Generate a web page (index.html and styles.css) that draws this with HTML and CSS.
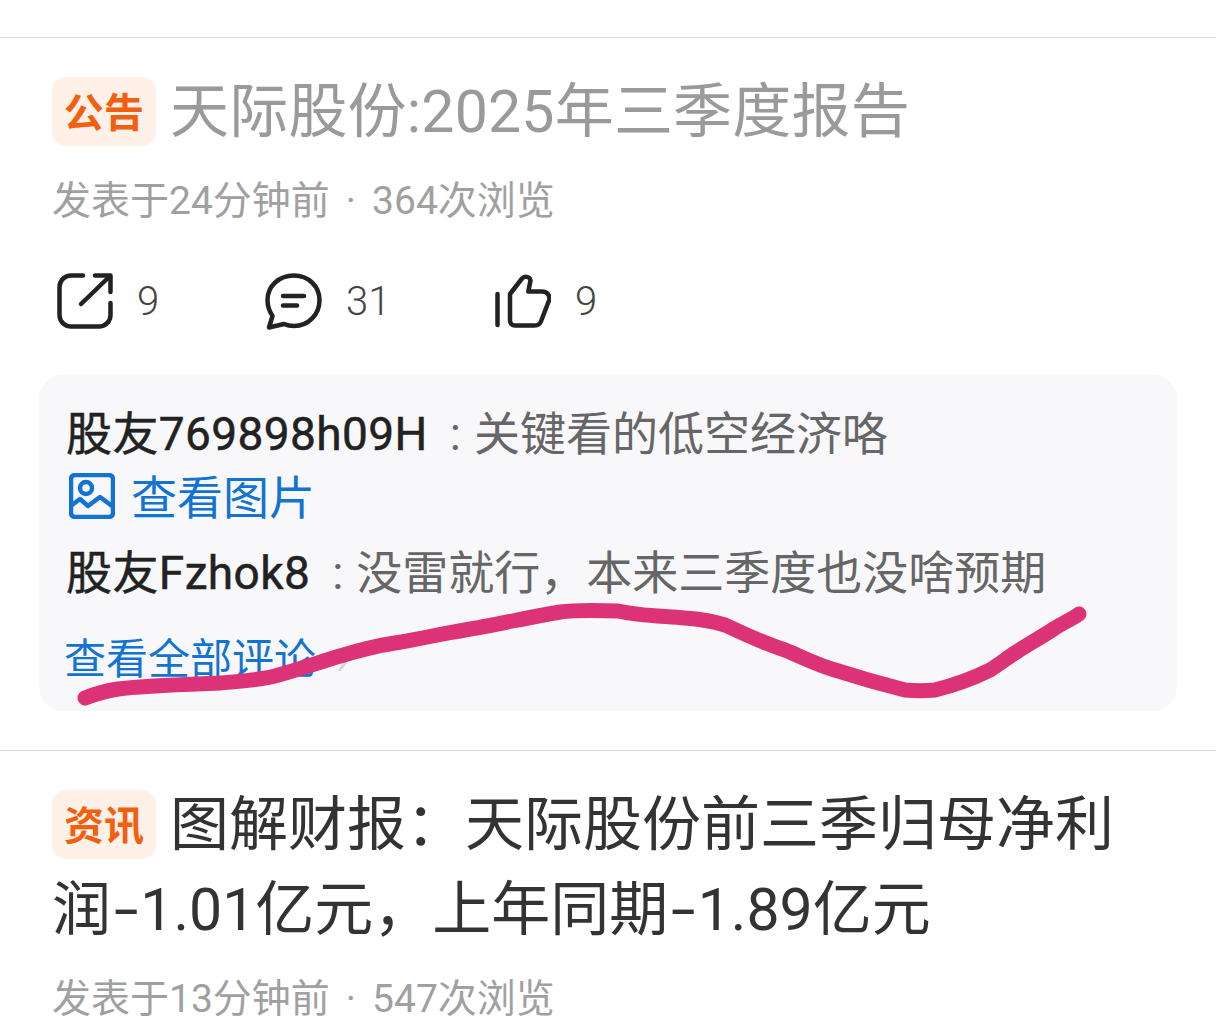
FILE: index.html
```html
<!DOCTYPE html>
<html lang="zh-CN">
<head>
    <meta charset="UTF-8">
    <meta name="viewport" content="width=device-width, initial-scale=1.0">
    <title>公告列表</title>
    <link rel="stylesheet" href="styles.css">
</head>
<body>
    <div class="feed">
        <div class="item">
            <h2 class="item-title muted"><span class="tag">公告</span>天际股份:2025年三季度报告</h2>
            <p class="item-meta">发表于24分钟前<span class="dot">·</span>364次浏览</p>
            <div class="stats">
                <div class="stat stat-share">
                    <svg class="icon-share" viewBox="0 0 56 56" fill="none" stroke="#222" stroke-width="4.5" stroke-linecap="round" stroke-linejoin="round">
                        <path d="M26 2.500H14A11.500 11.500 0 0 0 2.500 14V42A11.500 11.500 0 0 0 14 53.500H42A11.500 11.500 0 0 0 53.500 42V30"/>
                        <path d="M38 2.500H53.500V19"/>
                        <path d="M52 4L24 31"/>
                    </svg>
                    <span>9</span>
                </div>
                <div class="stat stat-comment">
                    <svg class="icon-comment" viewBox="0 0 57 57" fill="none" stroke="#222" stroke-width="4.5" stroke-linecap="round" stroke-linejoin="round">
                        <path d="M29 2.500C43 2.500 54.500 13 54.500 27C54.500 41.500 43.500 53 29 53C25.500 53 22 52.300 19 51L4 54.500L7.500 43C4.500 38.500 2.500 33 2.500 27C2.500 13 14 2.500 29 2.500Z"/>
                        <path d="M18 23H39"/>
                        <path d="M18 32.500H32"/>
                    </svg>
                    <span>31</span>
                </div>
                <div class="stat">
                    <svg class="icon-like" viewBox="0 0 56 54" fill="none" stroke="#222" stroke-width="4.5" stroke-linecap="round" stroke-linejoin="round">
                        <path d="M2.500 20V51"/>
                        <path d="M15 20L27 4.500C29.500 1.500 35 2.500 35.500 6.500L33.300 17.500H47C52.500 17.500 55.500 22 54 26.500L46.500 46C45.500 49.500 43 51.500 39.500 51.500H20C17 51.500 15 49.500 15 46.500Z"/>
                    </svg>
                    <span>9</span>
                </div>
            </div>
            <div class="comments">
                <p class="comment"><b>股友769898h09H</b><span class="colon">:</span>关键看的低空经济咯</p>
                <a class="view-pic" href="#">
                    <svg class="pic-icon" viewBox="0 0 46 46" fill="none" stroke="#1273d0" stroke-width="4.5" stroke-linejoin="round" stroke-linecap="round">
                        <rect x="2" y="2" width="42" height="42" rx="4"/>
                        <circle cx="17" cy="15" r="6"/>
                        <path d="M3 32L11 26L19 33L31 24L43 33"/>
                    </svg>
                    查看图片
                </a>
                <p class="comment comment-second"><b>股友Fzhok8</b><span class="colon">:</span>没雷就行&#xFF0C;本来三季度也没啥预期</p>
                <a class="view-all" href="#">查看全部评论<span class="chevron">›</span></a>
            </div>
        </div>
        <div class="item">
            <h2 class="item-title"><span class="tag">资讯</span>图解财报&#xFF1A;天际股份前三季归母净利润<span class="dash">-</span>1.01亿元&#xFF0C;上年同期<span class="dash">-</span>1.89亿元</h2>
            <p class="item-meta">发表于13分钟前<span class="dot">·</span>547次浏览</p>
        </div>
    </div>
    <svg class="scribble" viewBox="0 0 1216 1036" fill="none">
        <path d="M85 698C95 694 105 691 118 689C140 686 170 685 220 683C245 681 260 680 275 676C300 669 320 662 340 656C360 650 375 646 395 643C420 639 440 634 465 630C495 625 530 617 560 612C575 610 590 610 618 611C640 616 665 616 685 618C700 619 712 621 725 625C745 634 765 644 785 650C800 656 815 664 835 670C860 678 885 685 905 690C915 691 925 691 935 690C955 685 970 680 990 670C1000 664 1008 657 1018 651C1030 643 1045 635 1055 628C1063 623 1072 619 1079 614" stroke="#dc3278" stroke-width="15" stroke-linecap="round" stroke-linejoin="round"/>
    </svg>
</body>
</html>
```
FILE: styles.css
```css
* {
    margin: 0;
    padding: 0;
    box-sizing: border-box;
    font-family: Roboto, 'Noto Sans CJK SC', sans-serif;
}

html, body {
    height: 1036px;
    overflow: hidden;
    background: white;
}

body {
    padding-top: 37px;
}

.feed {
    border-top: 1px solid #dcdcdc;
}

.item {
    padding: 31px 39px 0;
    border-bottom: 1px solid #dcdcdc;
    height: 713px;
}

.item:last-child {
    border-bottom: none;
    height: auto;
}

.item-title {
    padding: 0 13px;
    font-size: 59px;
    line-height: 85px;
    font-weight: 400;
    color: #333;
}

.item-title.muted {
    color: #9a9a9a;
    letter-spacing: 0.2px;
}

.tag {
    display: inline-block;
    width: 104px;
    height: 69px;
    margin-right: 14px;
    border-radius: 14px;
    background: #fff0e8;
    color: #f1600f;
    font-size: 40px;
    font-weight: 700;
    line-height: 73px;
    text-align: center;
    vertical-align: 5px;
}

.dash {
    display: inline-block;
    margin: 0 6.500px;
    transform: scaleX(1.5);
}

.item-meta {
    margin-top: 22px;
    padding: 0 13px;
    font-size: 39px;
    line-height: 50px;
    color: #a0a0a0;
}

.dot {
    margin: 0 16px;
}

.stats {
    display: flex;
    margin-top: 46px;
    padding: 0 18px;
    height: 58px;
    align-items: center;
}

.stat {
    display: flex;
    align-items: center;
    gap: 24px;
    font-size: 40px;
    font-weight: 300;
    color: #444;
}

.stat-share {
    width: 208px;
}

.stat-comment {
    width: 230px;
}

.icon-share {
    width: 56px;
    height: 56px;
}

.icon-comment {
    width: 57px;
    height: 57px;
}

.icon-like {
    width: 56px;
    height: 54px;
}

.comments {
    margin-top: 45px;
    height: 336px;
    padding: 29px 27px 0;
    border-radius: 24px;
    background: #f8f8fb;
}

.comment {
    font-size: 46px;
    line-height: 60px;
    color: #666;
}

.comment b {
    font-weight: 400;
    color: #222;
    letter-spacing: 0.4px;
    -webkit-text-stroke: 0.5px #222;
}

.colon {
    margin: 0 13px 0 22px;
}

.comment-second {
    margin-top: 19px;
}

.view-pic {
    display: flex;
    align-items: center;
    gap: 16px;
    height: 60px;
    font-size: 46px;
    color: #1273d0;
    text-decoration: none;
}

.pic-icon {
    width: 46px;
    height: 46px;
    margin-top: 4px;
    margin-left: 3px;
}

.view-all {
    display: block;
    margin-top: 29px;
    margin-left: -2px;
    font-size: 42px;
    line-height: 56px;
    color: #1273d0;
    text-decoration: none;
}

.chevron {
    margin-left: 20px;
    color: #d4d4d4;
}

.scribble {
    position: absolute;
    left: 0;
    top: 0;
    width: 1216px;
    height: 1036px;
}
```
